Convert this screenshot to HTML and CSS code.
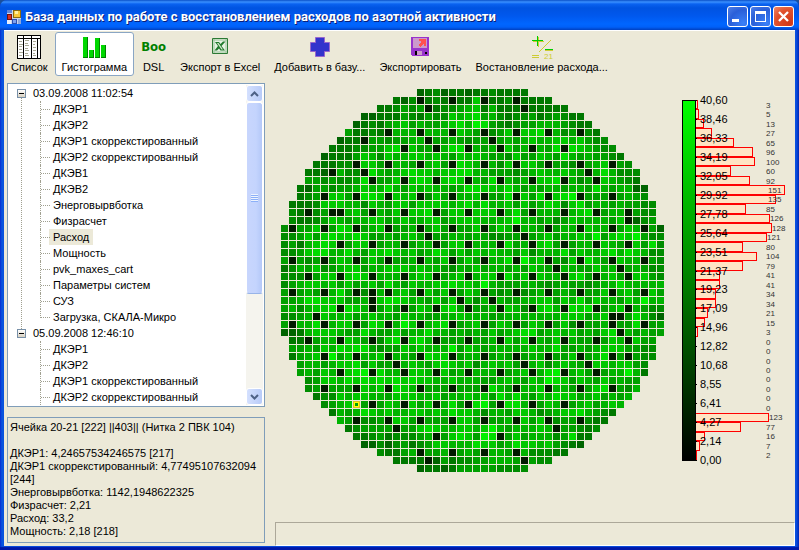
FILE: index.html
```html
<!DOCTYPE html>
<html lang="ru">
<head>
<meta charset="utf-8">
<title>База данных по работе с восстановлением расходов по азотной активности</title>
<link rel="stylesheet" href="styles.css">
</head>
<body>
<div class="window">
  <header class="titlebar">
    <svg class="app-icon" width="14" height="14" viewBox="0 0 14 14" shape-rendering="crispEdges">
      <rect width="14" height="14" fill="#c8d4ec"/>
      <rect x="0" y="0" width="5" height="3" fill="#5f86d8"/><rect x="0" y="10" width="4" height="4" fill="#e8eefa"/>
      <rect x="6" y="0" width="8" height="8" fill="#8a6a10"/><rect x="7" y="1" width="6" height="6" fill="#f8c838"/><rect x="8" y="1" width="3" height="3" fill="#fff0a0"/>
      <rect x="0" y="4" width="5" height="6" fill="#701010"/><rect x="1" y="5" width="3" height="4" fill="#d83020"/>
      <rect x="5" y="9" width="5" height="5" fill="#2c50b0"/><rect x="6" y="10" width="3" height="3" fill="#7aa0f0"/>
      <rect x="11" y="9" width="3" height="5" fill="#8ea8dc"/>
    </svg>
    <h1>База данных по работе с восстановлением расходов по азотной активности</h1>
    <div class="captions">
      <button class="cap" aria-label="Свернуть"><svg width="19" height="19" viewBox="0 0 19 19"><path d="M4 12h7v3H4z" fill="#fff"/></svg></button>
      <button class="cap" aria-label="Развернуть"><svg width="19" height="19" viewBox="0 0 19 19"><path d="M4 4h11v11H4zM5 7v7h9V7z" fill="#fff" fill-rule="evenodd"/></svg></button>
      <button class="cap close" aria-label="Закрыть"><svg width="19" height="19" viewBox="0 0 19 19"><path d="M5 5l9 9M14 5l-9 9" stroke="#fff" stroke-width="2.3"/></svg></button>
    </div>
  </header>
  <div class="client">
    <nav class="toolbar">
      <button class="tool">
        <svg width="24" height="24" viewBox="0 0 24 24" shape-rendering="crispEdges"><path d="M0 0h24v24H0z"/><path d="M1 1h5v2H1zM7 1h7v2H7zM15 1h8v2h-8zM1 4h5v19H1zM7 4h7v19H7zM15 4h5v19h-5zM21 4h2v19h-2z" fill="#fff"/><path d="M2 6h3M2 9h4M2 11h3M2 14h3M2 17h4M2 20h3M8 5h4M8 8h3M8 10h4M8 13h3M8 15h4M8 18h3M8 20h4M16 6h3M16 9h2M16 12h3M16 15h3M16 18h2M16 20h3" stroke="#a8a894" transform="translate(0 .5)"/></svg>
        <span>Список</span>
      </button>
      <button class="tool active">
        <svg width="24" height="24" viewBox="0 0 24 24" shape-rendering="crispEdges"><path d="M1 2h5v21H1zM7 15h5v8H7zM13 3h5v20h-5zM19 10h5v13h-5z" fill="#008000"/><path d="M1 2h4v20H1zM7 15h4v7H7zM13 3h4v19h-4zM19 10h4v12h-4z" fill="#00d800"/></svg>
        <span>Гистограмма</span>
      </button>
      <button class="tool"><b class="boo">Boo</b><span>DSL</span></button>
      <button class="tool">
        <svg width="24" height="24" viewBox="0 0 24 24"><path d="M4.500 3.500h15v15h-15z" fill="#e7f2e3" stroke="#2c7a34"/><path d="M5 5h14M5 17h14M6 4v14M18 4v14" stroke="#9cc49c"/><path d="M7 7h4l1.500 2L15 6.500h2.500L13.500 11l3.500 4.500h-4.500l-1.500-2L9 15.500H6.500L10 11z" fill="#217a2c"/><path d="M9 8h1.500l4.500 6.500h-1.500z" fill="#d4e8cc"/></svg>
        <span>Экспорт в Excel</span>
      </button>
      <button class="tool">
        <svg width="24" height="24" viewBox="0 0 24 24"><path d="M7.500 2.500h9v5h5v9h-5v5h-9v-5h-5v-9h5z" fill="#3333cc" stroke="#9966cc"/></svg>
        <span>Добавить в базу...</span>
      </button>
      <button class="tool">
        <svg width="24" height="24" viewBox="0 0 24 24" shape-rendering="crispEdges"><path d="M3 2h18v19H4l-1-1z" fill="#9933cc"/><path d="M5 3h14v10H5z" fill="#cc99cc"/><path d="M6 16h12v4H6z" fill="#9933cc"/><path d="M7 16h2v4H7zM17 17h2v2h-2z"/><path d="M9 16h5v4H9z" fill="#cc99cc"/><path d="M11 4h7v7h-2V9h-1l-3 3-2-2 3-3V6h-2z" fill="#ff5050"/></svg>
        <span>Экспортировать</span>
      </button>
      <button class="tool">
        <svg width="24" height="24" viewBox="0 0 24 24" shape-rendering="crispEdges"><path d="M9 17L21 5" stroke="#cccc33"/><path d="M8 2h1v10H8zM3 6h11v1H3zM15 15h8v1h-8zM2 20h7v1H2zM2 22h7v1H2z" fill="#cccc33"/><path d="M7 1h1v10H7zM2 5h11v1H2zM15 14h8v1h-8z" fill="#00cc00"/><text x="14" y="24" class="icon-num">21</text></svg>
        <span>Востановление расхода...</span>
      </button>
    </nav>
    <main class="body">
      <aside class="side">
        <section class="tree">
          <ul class="roots">
            <li><button class="toggle" aria-label="Свернуть ветку"></button><span>03.09.2008 11:02:54</span>
              <ul><li><span>ДКЭР1</span></li><li><span>ДКЭР2</span></li><li><span>ДКЭР1 скоррекстированный</span></li><li><span>ДКЭР2 скоррекстированный</span></li><li><span>ДКЭВ1</span></li><li><span>ДКЭВ2</span></li><li><span>Энерговырвботка</span></li><li><span>Физрасчет</span></li><li><span class="picked">Расход</span></li><li><span>Мощность</span></li><li><span>pvk_maxes_cart</span></li><li><span>Параметры систем</span></li><li><span>СУЗ</span></li><li><span>Загрузка, СКАЛА-Микро</span></li></ul>
            </li>
            <li><button class="toggle" aria-label="Свернуть ветку"></button><span>05.09.2008 12:46:10</span>
              <ul><li><span>ДКЭР1</span></li><li><span>ДКЭР2</span></li><li><span>ДКЭР1 скоррекстированный</span></li><li><span>ДКЭР2 скоррекстированный</span></li></ul>
            </li>
          </ul>
          <div class="scroll">
            <button class="arrow" aria-label="Вверх"><svg width="9" height="6" viewBox="0 0 9 6"><path d="M1 5l3.500-3.500L8 5" fill="none" stroke="#4d6185" stroke-width="2"/></svg></button>
            <div class="track"><div class="thumb"><i></i></div></div>
            <button class="arrow" aria-label="Вниз"><svg width="9" height="6" viewBox="0 0 9 6"><path d="M1 1l3.500 3.500L8 1" fill="none" stroke="#4d6185" stroke-width="2"/></svg></button>
          </div>
        </section>
        <section class="info">
          <p>Ячейка 20-21 [222] ||403|| (Нитка 2 ПВК 104)</p>
          <p class="gap">ДКЭР1: 4,24657534246575 [217]</p>
          <p>ДКЭР1 скоррекстированный: 4,77495107632094 [244]</p>
          <p>Энерговырвботка: 1142,1948622325</p>
          <p>Физрасчет: 2,21</p>
          <p>Расход: 33,2</p>
          <p>Мощность: 2,18 [218]</p>
        </section>
      </aside>
      <section class="view">
        <div class="plots">
          <svg class="core" viewBox="0 0 384 384" shape-rendering="crispEdges"></svg>
          <svg class="hist" viewBox="0 0 112 384"></svg>
        </div>
        <div class="status"></div>
      </section>
    </main>
  </div>
</div>
<script src="plots.js"></script>
</body>
</html>
```
FILE: plots.js
```js
const NS = 'http://www.w3.org/2000/svg';
function add(parent, name, attrs, text) {
  const el = document.createElementNS(NS, name);
  for (const k in attrs) el.setAttribute(k, attrs[k]);
  if (text !== undefined) el.textContent = text;
  parent.appendChild(el);
  return el;
}

// Flow levels of each core row: left half | right half (hex digits, higher is brighter).
const rows = [
  '3453443|4454444', '4350454044|8044504444', '445656045567|847444044444',
  '33444654655878|96754556456544', '345467867667897|A96545667776544',
  '6445407770777087|6056808890756054', '34406656677066765|66067678778878655',
  '444556689086607990|767086707690987655', '3444687587788787687|8766586687697676654',
  '44455088607708780998|70758088606650678065', '443075509767898878899|776665678778760797555',
  '665655690668089808980|769076708890756087654', '4366566787797687877679|9887976767767769767733',
  '4560886099808780586077|806690869089A906670765', '44458887758768868888789|79778686798589677676655',
  '54050977808768088970887|88807960777078906776055', '54456876778867877886788|87778A7767568777768535',
  '506685098807866077086806|806870776707708778087603', '556868988986676786706776|765566707867787A6898A655',
  '564789870889077507790889|777096708969077087088095', '556899779768898786798686|878776857779687789798755',
  '606567087708676077708868|607790A78065809760877605', '457685678867788878776576|867767687607766877807655',
  '555068808980777078890789|788096808770896078078865', '567887868678697687788988|7A7666776567665677977777',
  '606760796050707867808708|770567507607670686780680', '667998886677899877686807|577706778868796877687A77',
  '675788909877086808778967|607087508970989807867655', '556708778678776877667787|776677777778886787009753',
  '607790788069807A80789707|806876087068580678069066', '334788876697668677977676|768678996787867689076766',
  '44067708760589089780667|66768088708770670870866', '66768798996566878777A68|76777778779667678886655',
  '46780A68077807760988067|79076A07780687079809655', '6776788968608787689878|5787808785787078878865',
  '67687089A0977088708670|7776078079A07808677A74', '568879898989898877877|766787687A986876867',
  '566066087809877066806|609760778077076890657', '45587887768887786778|78697976879886786767',
  '5678807087780897909|9A08997808780786787', '476798787788787988|757768875678897654',
  '76055078807660988|6A067780805608544', '4566665068987788|78A7677787066545',
  '445645556780898|6A9068677756944', '33535645688777|98867988786543',
  '544676067807|607760755544', '4444530455|6677765055', '3443466|6665555'
];
// Channels without flow.
const step = (a, b) => { const r = []; for (let i = a; i <= b; i += 4) r.push(i); return r; };
const dark = {
  1: step(17, 29), 2: [18, 30], 5: step(13, 37), 6: [10, 18, 26], 7: step(15, 35), 9: step(9, 41),
  10: [6, 10, 38], 11: step(11, 39), 13: step(5, 41), 15: [3, 6, ...step(7, 43)], 16: [43], 17: step(1, 45),
  18: [18, 30], 19: step(7, 43), 21: step(1, 45), 22: [34, 42], 23: step(3, 43), 25: [11, ...step(1, 45)],
  26: [11, 22, 26], 27: step(7, 43), 28: [4, 41, 42], 29: step(1, 45), 30: [42], 31: step(3, 43),
  33: [...step(5, 41), 43], 34: [14, 30, 38], 35: step(7, 39), 37: step(5, 41), 39: step(11, 35),
  41: step(9, 37), 42: [14, 34], 43: [19, 27], 45: step(17, 29), 46: [18, 30]
};
const inset = [17, 14, 12, 10, 9, 8, 7, 6, 5, 4, 3, 3, 2, 2, 1, 1, 1, 0, 0, 0, 0, 0, 0, 0];
const core = document.querySelector('.core');
rows.forEach((row, r) => {
  const start = inset[Math.min(r, 47 - r)];
  const [left, right] = row.split('|');
  for (let c = start; c < 48 - start; c++) {
    const level = parseInt(c < 24 ? left[c - start] : right[c - 24], 16) || 6;
    const fill = (dark[r] || []).includes(c) ? '#001a00' : `rgb(0,${40 + level * 20},0)`;
    add(core, 'rect', { x: c * 8, y: r * 8, width: 7, height: 7, fill });
  }
});
// Selected channel.
add(core, 'rect', { x: 72, y: 312, width: 7, height: 7, fill: '#e0c020' });
add(core, 'rect', { x: 73, y: 313, width: 5, height: 5, fill: '#ffff00' });
add(core, 'rect', { x: 74, y: 314, width: 3, height: 3, fill: '#00a000' });

// Colour scale with the distribution of channels over it.
const counts = [3, 5, 13, 27, 65, 96, 100, 60, 92, 151, 135, 85, 126, 128, 121, 80, 104, 79, 41, 41,
  34, 34, 21, 15, 3, 0, 0, 0, 0, 0, 0, 0, 0, 123, 77, 16, 7, 2];
const ticks = ['40,60', '38,46', '36,33', '34,19', '32,05', '29,92', '27,78', '25,64', '23,51', '21,37',
  '19,23', '17,09', '14,96', '12,82', '10,68', '8,55', '6,41', '4,27', '2,14', '0,00'];
const hist = document.querySelector('.hist');
const grad = add(hist, 'linearGradient', { id: 'scale', x1: 0, y1: 0, x2: 0, y2: 1 });
add(grad, 'stop', { offset: 0, 'stop-color': '#00ff00' });
add(grad, 'stop', { offset: 1, 'stop-color': '#000000' });
const top0 = 11, span = 360;
const at = (i, n) => Math.round(top0 + i * span / n);
counts.forEach((n, i) => {
  const y = at(i, 38);
  const width = Math.max(Math.round(n * 0.59), 1);
  if (n) add(hist, 'rect', { x: 13.5, y: y + 0.5, width, height: at(i + 1, 38) - y - 1, class: 'bar' });
});
add(hist, 'rect', { x: 0.5, y: 11.5, width: 13, height: 360, fill: 'url(#scale)', stroke: '#000' });
ticks.forEach((t, i) => {
  const y = at(i, 19);
  add(hist, 'rect', { x: 13, y, width: 2, height: 1 });
  add(hist, 'text', { x: 18, y: y + 4, class: 'tick' }, t);
});
counts.forEach((n, i) => {
  const end = 14 + Math.round(n * 0.59);
  const x = end > 90 ? 86 : Math.max(84, end);
  add(hist, 'text', { x, y: at(i + 0.5, 38) + 3, class: 'count' }, n);
});
```
FILE: styles.css
```css
* { box-sizing: border-box; }
body { margin: 0; background: #1a4f9c; font: 11px/16px "Liberation Sans", Arial, sans-serif; color: #000; }
button { font: inherit; color: inherit; border: 0; background: none; padding: 0; margin: 0; }
ul { list-style: none; margin: 0; padding: 0; }
p { margin: 0; }

.window {
  min-height: 100vh; display: flex; flex-direction: column; padding: 0 4px 4px;
  background: linear-gradient(90deg, #0831d9, #0855dd 2px, #0855dd 3px, #0a50e0 4px, #0a50e0 calc(100% - 3px), #0029b8);
  border-radius: 7px 7px 0 0; box-shadow: inset 0 -3px 1px #0018a8;
}
.titlebar {
  height: 30px; flex: none; display: flex; align-items: center; gap: 4px; margin: 0 -4px; padding: 3px 5px 0 7px;
  border-radius: 7px 7px 0 0;
  background: linear-gradient(#0a50c8, #3a90ff 2px, #0a62f0 4px, #0053e1 8px, #0058ee 16px, #0066ff 24px, #0060f8 27px, #0040c0 30px);
}
h1 { flex: 1; margin: 0; font: bold 13px/18px Roboto, sans-serif; color: #fff; text-shadow: 1px 1px 0 #0a1e78; white-space: nowrap; }
.captions { display: flex; gap: 2px; }
.cap { width: 21px; height: 21px; border: 1px solid #fff; border-radius: 3px; background: radial-gradient(circle at 80% 85%, #3a80f8, #2a5fd8 60%, #5080e8); }
.cap svg { display: block; }
.close { background: radial-gradient(circle at 80% 85%, #d03818, #e0502c 60%, #f08868); }

.client { flex: 1; display: flex; flex-direction: column; background: #ece9d8; border-top: 1px solid #fff; }
.toolbar { display: flex; padding-top: 1px; height: 50px; }
.tool { display: flex; flex-direction: column; align-items: center; gap: 1px; height: 44px; padding: 2px 6px 0; border: 1px solid transparent; border-radius: 3px; white-space: nowrap; line-height: 14px; }
.tool svg, .boo { flex: none; height: 24px; }
.active { background: #fff; border-color: #8aa6c4; }
.boo { font: bold 13px/24px "DejaVu Sans Condensed", "DejaVu Sans", sans-serif; color: #008000; }
.icon-num { font: 8px "Liberation Sans", sans-serif; fill: #cccc33; }

.body { flex: 1; display: grid; grid-template-columns: 258px minmax(0, 1fr); gap: 10px; padding: 2px 0 0 3px; }
.side { display: flex; flex-direction: column; gap: 10px; padding-bottom: 3px; }
.tree { flex: 1; display: flex; justify-content: space-between; background: #fff; border: 1px solid #7f9db9; padding: 1px; }
.roots { padding: 0 0 0 8px; }
.roots > li { position: relative; padding-left: 16px; }
.roots > li::before { content: ""; position: absolute; left: 4px; top: 12px; bottom: -4px; border-left: 1px dotted #a0a090; }
.roots > li:last-child::before { display: none; }
.toggle { position: absolute; left: 0; top: 4px; width: 9px; height: 9px; border: 1px solid #7890a8; background: linear-gradient(#000, #000) center / 5px 1px no-repeat, linear-gradient(#fff, #d8d0c0); }
.roots ul { margin-left: 7px; }
.roots ul li { position: relative; height: 16px; padding-left: 9px; }
.roots ul li::before { content: ""; position: absolute; left: 0; top: 0; height: 16px; width: 9px; border-left: 1px dotted #a0a090; background: repeating-linear-gradient(90deg, #a0a090 0 1px, transparent 1px 2px) 0 8px / 100% 1px no-repeat; }
.roots ul li:last-child::before { height: 9px; }
.roots > li:last-child ul li::before { height: 16px; }
.roots ul span { display: inline-block; padding: 0 4px; white-space: nowrap; }
.picked { background: #ece9d8; }
.scroll { width: 17px; display: flex; flex-direction: column; background: #f5f4ee; }
.arrow { height: 17px; border: 1px solid #fff; border-radius: 3px; background: linear-gradient(90deg, #d4e0fe, #b8cbf8); display: grid; place-items: center; }
.track { flex: 1; }
.thumb { height: 67%; border: 1px solid #fff; border-bottom-color: #98b4e8; border-radius: 3px; background: linear-gradient(90deg, #c8d6fd, #c4d4fd 60%, #b4c8f8); display: grid; place-items: center; }
.thumb i { width: 7px; height: 8px; background: repeating-linear-gradient(#eef4fe 0 1px, #8cb0f8 1px 2px); }
.info { border: 1px solid #7f9db9; padding: 3px 2px 4px; line-height: 13px; }
.gap { margin-top: 13px; }

.view { display: flex; flex-direction: column; min-width: 0; }
.plots { flex: 1; display: grid; grid-template-columns: minmax(0, 384px) minmax(0, 112px); gap: 17px; align-content: start; padding: 6px 0 0 6px; }
.plots svg { width: 100%; display: block; overflow: visible; }
.bar { fill: #ffe4c4; stroke: #f00; }
.tick { font: 11px "Liberation Sans", sans-serif; }
.count { font: 8px "Liberation Sans", sans-serif; fill: #333; }
.status { height: 24px; border: 1px solid; border-color: #aca899 #fff #fff #aca899; }
```
